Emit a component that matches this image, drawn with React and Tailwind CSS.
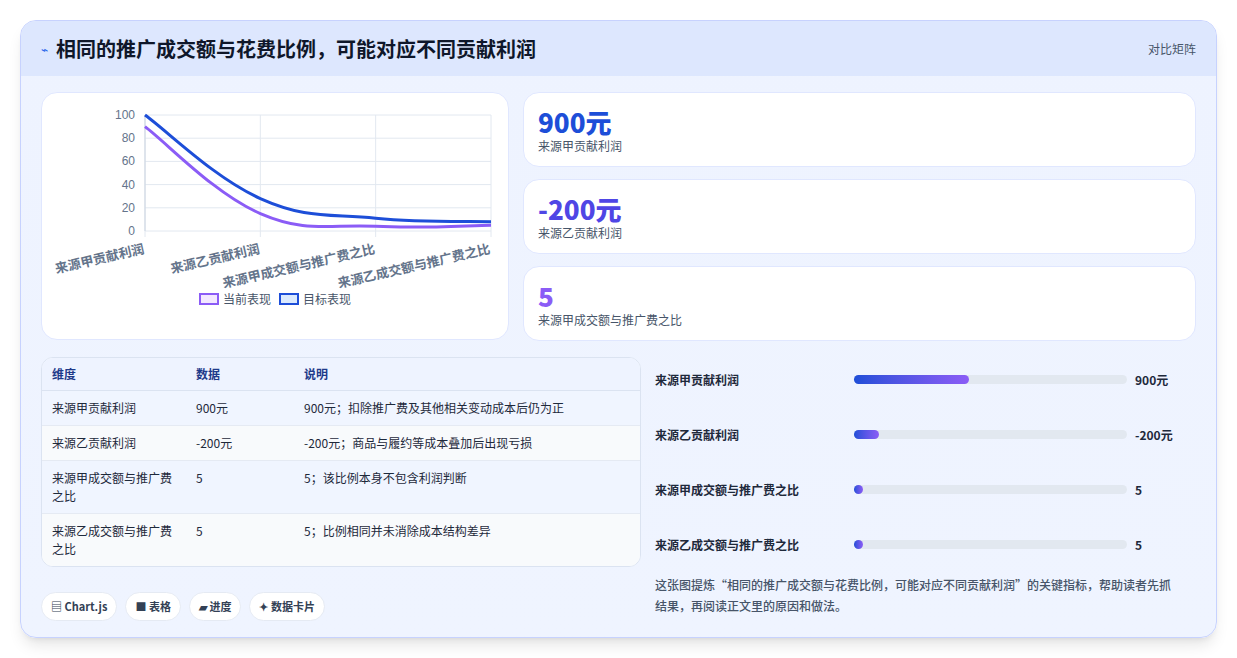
import React from 'react'

const font = { fontFamily: '"Noto Sans CJK SC", "Noto Sans", sans-serif' }

const rows = [
  ['来源甲贡献利润', '900元', '900元；扣除推广费及其他相关变动成本后仍为正'],
  ['来源乙贡献利润', '-200元', '-200元；商品与履约等成本叠加后出现亏损'],
  ['来源甲成交额与推广费之比', '5', '5；该比例本身不包含利润判断'],
  ['来源乙成交额与推广费之比', '5', '5；比例相同并未消除成本结构差异'],
]

const bars = [
  ['来源甲贡献利润', 42, '900元'],
  ['来源乙贡献利润', 9, '-200元'],
  ['来源甲成交额与推广费之比', 2, '5'],
  ['来源乙成交额与推广费之比', 2, '5'],
]

// catmull-rom to bezier
function smooth(pts) {
  let d = `M${pts[0][0]} ${pts[0][1]}`
  for (let i = 0; i < pts.length - 1; i++) {
    const p0 = pts[i - 1] || pts[i]
    const p1 = pts[i]
    const p2 = pts[i + 1]
    const p3 = pts[i + 2] || p2
    const t = 0.4
    const c1 = [p1[0] + ((p2[0] - p0[0]) * t) / 2, p1[1] + ((p2[1] - p0[1]) * t) / 2]
    const c2 = [p2[0] - ((p3[0] - p1[0]) * t) / 2, p2[1] - ((p3[1] - p1[1]) * t) / 2]
    d += ` C${c1[0]} ${c1[1]}, ${c2[0]} ${c2[1]}, ${p2[0]} ${p2[1]}`
  }
  return d
}

function Chart() {
  const x0 = 103, x1 = 449, y0 = 22, y1 = 138
  const ys = [100, 80, 60, 40, 20, 0]
  const yy = (v) => y1 - (v / 100) * (y1 - y0)
  const xs = [0, 1, 2, 3].map((i) => x0 + (i * (x1 - x0)) / 3)
  const labels = ['来源甲贡献利润', '来源乙贡献利润', '来源甲成交额与推广费之比', '来源乙成交额与推广费之比']
  const cur = [90, 15, 4, 5].map((v, i) => [xs[i], yy(v)])
  const tgt = [100, 28, 11, 8].map((v, i) => [xs[i], yy(v)])
  return (
    <svg width="468" height="200" viewBox="0 0 468 200">
      {ys.map((v) => (
        <g key={v}>
          <line x1={x0} x2={x1} y1={yy(v)} y2={yy(v)} stroke="#e2e8f0" />
          <text x={x0 - 10} y={yy(v) + 4} textAnchor="end" fontSize="12" fill="#64748b" fontFamily="Liberation Sans, sans-serif">{v}</text>
        </g>
      ))}
      {xs.map((x) => <line key={x} x1={x} x2={x} y1={y0} y2={y1 + 6} stroke="#e2e8f0" />)}
      <line x1={x0} x2={x0} y1={y0} y2={y1} stroke="#cbd5e1" />
      <path d={smooth(cur)} fill="none" stroke="#8b5cf6" strokeWidth="3" />
      <path d={smooth(tgt)} fill="none" stroke="#1d4ed8" strokeWidth="3" />
      {labels.map((l, i) => (
        <text key={l} x={xs[i]} y={y1 + 22} textAnchor="end" fontSize="13" fontWeight="600" fill="#64748b" transform={`rotate(-13 ${xs[i]} ${y1 + 22})`} style={font}>{l}</text>
      ))}
    </svg>
  )
}

export default function App() {
  return (
    <div className="min-h-screen bg-white p-5" style={font}>
      <div className="h-[618px] overflow-hidden rounded-2xl border border-[#c7d2fe] bg-gradient-to-b from-[#eef3ff] to-[#eff4ff] shadow-lg">
        <div className="flex h-[55px] items-center justify-between bg-[#dde7fe] px-5">
          <div className="flex items-center gap-2">
            <span className="text-xs text-[#2563eb]">⌁</span>
            <span className="text-[20px] font-bold text-[#0f172a]">相同的推广成交额与花费比例，可能对应不同贡献利润</span>
          </div>
          <span className="text-xs text-[#475569]">对比矩阵</span>
        </div>
        <div className="px-5 pt-[16px]">
          <div className="flex gap-[14px]">
            <div className="h-[248px] w-[468px] rounded-2xl border border-[#e0e7ff] bg-white">
              <Chart />
              <div className="-mt-[2px] flex justify-center gap-2 text-xs text-[#475569]">
                <span className="flex items-center gap-1"><span className="h-3 w-5 border-2 border-[#8b5cf6] bg-[#f3e8ff]" />当前表现</span>
                <span className="flex items-center gap-1"><span className="h-3 w-5 border-2 border-[#1d4ed8] bg-[#dbeafe]" />目标表现</span>
              </div>
            </div>
            <div className="flex flex-1 flex-col gap-3">
              {[
                ['900元', 'text-[#1d4ed8]', '来源甲贡献利润'],
                ['-200元', 'text-[#4f46e5]', '来源乙贡献利润'],
                ['5', 'text-[#8b5cf6]', '来源甲成交额与推广费之比'],
              ].map(([v, c, l]) => (
                <div key={l} className="flex h-[75px] flex-col justify-center rounded-2xl border border-[#e0e7ff] bg-white px-[14px]">
                  <div className={`text-[26px] font-extrabold leading-8 ${c}`}>{v}</div>
                  <div className="text-xs text-[#475569]">{l}</div>
                </div>
              ))}
            </div>
          </div>
          <div className="mt-4 flex gap-[14px]">
            <div className="w-[600px]">
              <div className="overflow-hidden rounded-xl border border-[#dbe3f1] bg-white text-xs text-[#1e293b]">
                <div className="flex h-[33px] items-center border-b border-[#dbe3f1] bg-[#eef3ff] px-[10px] font-semibold text-[#1e3a8a]">
                  <span className="w-[144px]">维度</span><span className="w-[108px]">数据</span><span>说明</span>
                </div>
                {rows.map((r, i) => (
                  <div key={r[0]} className={`flex border-b border-[#e5eaf3] px-[10px] py-[8px] leading-[18px] last:border-b-0 ${i % 2 ? 'bg-[#f8fafc]' : 'bg-[#f0f5ff]'}`}>
                    <span className="w-[144px] pr-[24px]">{r[0]}</span>
                    <span className="w-[108px]">{r[1]}</span>
                    <span>{r[2]}</span>
                  </div>
                ))}
              </div>
              <div className="mt-[25px] flex gap-2 text-[11px] font-semibold text-[#334155]">
                {['▤ Chart.js', '■ 表格', '▰ 进度', '✦ 数据卡片'].map((t) => (
                  <span key={t} className="rounded-full border border-[#e5eaf3] bg-white px-[9px] py-[5px]">{t}</span>
                ))}
              </div>
            </div>
            <div className="-mt-[5px] flex-1 pr-[14px]">
              {bars.map(([l, w, v]) => (
                <div key={l} className="flex h-[55px] items-center text-xs font-semibold text-[#1e293b]">
                  <span className="w-[199px]">{l}</span>
                  <div className="h-[9px] w-[273px] rounded-full bg-[#e2e8f0]">
                    <div className="h-full rounded-full bg-gradient-to-r from-[#1d4ed8] to-[#8b5cf6]" style={{ width: `${w}%`, minWidth: 9 }} />
                  </div>
                  <span className="ml-[8px]">{v}</span>
                </div>
              ))}
              <p className="mt-[2px] text-xs font-medium leading-[21px] text-[#475569]">这张图提炼“相同的推广成交额与花费比例，可能对应不同贡献利润”的关键指标，帮助读者先抓结果，再阅读正文里的原因和做法。</p>
            </div>
          </div>
        </div>
      </div>
    </div>
  )
}
